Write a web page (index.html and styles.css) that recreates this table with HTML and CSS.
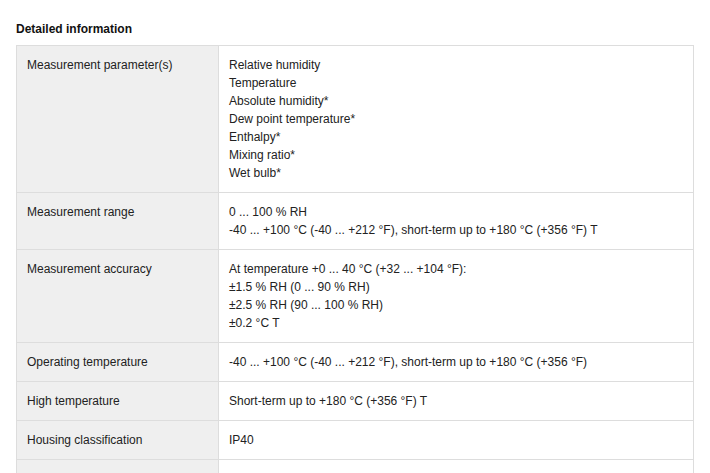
FILE: index.html
```html
<!DOCTYPE html>
<html>
<head>
<meta charset="utf-8">
<link rel="stylesheet" href="styles.css">
</head>
<body>
<div class="page">
  <h2 class="title">Detailed information</h2>
  <table class="specs">
    <tr>
      <th>Measurement parameter(s)</th>
      <td>Relative humidity<br>Temperature<br>Absolute humidity*<br>Dew point temperature*<br>Enthalpy*<br>Mixing ratio*<br>Wet bulb*</td>
    </tr>
    <tr>
      <th>Measurement range</th>
      <td>0 ... 100 % RH<br>-40 ... +100 °C (-40 ... +212 °F), short-term up to +180 °C (+356 °F) T</td>
    </tr>
    <tr>
      <th>Measurement accuracy</th>
      <td>At temperature +0 ... 40 °C (+32 ... +104 °F):<br>±1.5 % RH (0 ... 90 % RH)<br>±2.5 % RH (90 ... 100 % RH)<br>±0.2 °C T</td>
    </tr>
    <tr>
      <th>Operating temperature</th>
      <td>-40 ... +100 °C (-40 ... +212 °F), short-term up to +180 °C (+356 °F)</td>
    </tr>
    <tr>
      <th>High temperature</th>
      <td>Short-term up to +180 °C (+356 °F) T</td>
    </tr>
    <tr>
      <th>Housing classification</th>
      <td>IP40</td>
    </tr>
    <tr>
      <th>&nbsp;</th>
      <td>&nbsp;</td>
    </tr>
  </table>
</div>
</body>
</html>
```
FILE: styles.css
```css
html, body {
  margin: 0;
  padding: 0;
  background: #fff;
}
.page {
  padding: 21px 16px 16px 16px;
  font-family: "Liberation Sans", Arial, sans-serif;
  color: #222;
}
.title {
  font-size: 12px;
  line-height: 16px;
  font-weight: bold;
  margin: 0 0 8px 0;
  color: #111;
}
.specs {
  width: 678px;
  border-collapse: collapse;
  font-size: 12px;
  line-height: 18px;
}
.specs th,
.specs td {
  border: 1px solid #ddd;
  padding: 10px;
  vertical-align: top;
  text-align: left;
  font-weight: normal;
}
.specs th {
  width: 181px;
  background: #efefef;
}
.specs td {
  background: #fff;
}
```
